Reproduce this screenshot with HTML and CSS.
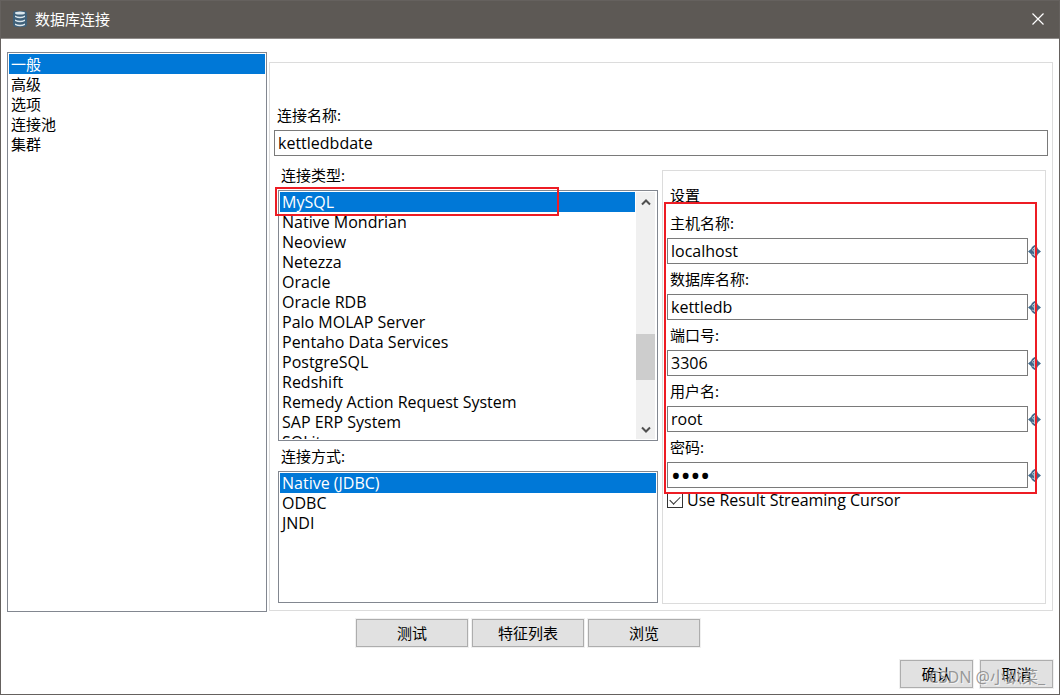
FILE: index.html
```html
<!DOCTYPE html>
<html lang="zh-CN">
<head>
<meta charset="utf-8">
<title>数据库连接</title>
<link rel="stylesheet" href="styles.css">
</head>
<body>
<svg class="defs" aria-hidden="true">
  <symbol id="variable" viewBox="0 0 13 13">
    <path d="M0 6.500 L3 4 L4 2 L6.500 0 L9 2 L10 4 L13 6.500 L10 9 L9 11 L6.500 13 L4 11 L3 9 Z" fill="#43698a"/>
    <path d="M8.700 3.800 C7.500 2.800 4.500 3 4.500 4.800 C4.500 6.800 8.500 6 8.500 8.200 C8.500 10 5.300 10 4.200 9 M6.500 2 V11" fill="none" stroke="#b9cad6" stroke-width="1"/>
  </symbol>
</svg>
<div class="window">
  <header class="titlebar">
    <svg class="app-icon" viewBox="0 0 14 18" aria-hidden="true">
      <rect x="0" y="1" width="14" height="16" rx="3" fill="#3f6079"/>
      <g fill="#dbe6ed">
        <ellipse cx="7" cy="3" rx="5" ry="1.500"/>
        <path d="M2 5.500 Q7 8 12 5.500 V7 Q7 9.500 2 7Z"/>
        <path d="M2 9.500 Q7 12 12 9.500 V11 Q7 13.500 2 11Z"/>
        <path d="M2 13.500 Q7 16 12 13.500 V15 Q7 17.500 2 15Z"/>
      </g>
    </svg>
    <h1 class="title">数据库连接</h1>
    <button class="close" type="button" aria-label="关闭">
      <svg viewBox="0 0 12 12" aria-hidden="true"><path d="M0.500 0.500 L11.500 11.500 M11.500 0.500 L0.500 11.500" stroke="#fff" stroke-width="1.200"/></svg>
    </button>
  </header>

  <main class="body">
    <ul class="listbox" role="listbox" aria-label="分类">
      <li class="option selected" role="option" aria-selected="true">一般</li>
      <li class="option" role="option">高级</li>
      <li class="option" role="option">选项</li>
      <li class="option" role="option">连接池</li>
      <li class="option" role="option">集群</li>
    </ul>

    <section class="group">
      <label class="label" for="name">连接名称:</label>
      <input class="text" id="name" type="text" value="kettledbdate">

      <div class="columns">
        <div class="choices">
          <span class="label" id="type-label">连接类型:</span>
          <div class="listbox scrolling marked">
            <ul class="options latin" role="listbox" aria-labelledby="type-label">
              <li class="option selected" role="option" aria-selected="true">MySQL</li>
              <li class="option" role="option">Native Mondrian</li>
              <li class="option" role="option">Neoview</li>
              <li class="option" role="option">Netezza</li>
              <li class="option" role="option">Oracle</li>
              <li class="option" role="option">Oracle RDB</li>
              <li class="option" role="option">Palo MOLAP Server</li>
              <li class="option" role="option">Pentaho Data Services</li>
              <li class="option" role="option">PostgreSQL</li>
              <li class="option" role="option">Redshift</li>
              <li class="option" role="option">Remedy Action Request System</li>
              <li class="option" role="option">SAP ERP System</li>
              <li class="option" role="option">SQLite</li>
            </ul>
            <div class="scrollbar">
              <button class="arrow" type="button" aria-label="向上滚动"><svg viewBox="0 0 10 7" aria-hidden="true"><path d="M1 5.500 L5 1.500 L9 5.500"/></svg></button>
              <div class="track"><div class="thumb"></div></div>
              <button class="arrow" type="button" aria-label="向下滚动"><svg viewBox="0 0 10 7" aria-hidden="true"><path d="M1 1.500 L5 5.500 L9 1.500"/></svg></button>
            </div>
          </div>
          <span class="label" id="access-label">连接方式:</span>
          <ul class="listbox access latin" role="listbox" aria-labelledby="access-label">
            <li class="option selected" role="option" aria-selected="true">Native (JDBC)</li>
            <li class="option" role="option">ODBC</li>
            <li class="option" role="option">JNDI</li>
          </ul>
        </div>

        <section class="settings">
          <h2 class="label heading">设置</h2>
          <div class="fields">
            <div class="field">
              <label class="label" for="host">主机名称:</label>
              <div class="entry"><input class="text" id="host" type="text" value="localhost"><svg class="variable" aria-hidden="true"><use href="#variable"/></svg></div>
            </div>
            <div class="field">
              <label class="label" for="database">数据库名称:</label>
              <div class="entry"><input class="text" id="database" type="text" value="kettledb"><svg class="variable" aria-hidden="true"><use href="#variable"/></svg></div>
            </div>
            <div class="field">
              <label class="label" for="port">端口号:</label>
              <div class="entry"><input class="text" id="port" type="text" value="3306"><svg class="variable" aria-hidden="true"><use href="#variable"/></svg></div>
            </div>
            <div class="field">
              <label class="label" for="user">用户名:</label>
              <div class="entry"><input class="text" id="user" type="text" value="root"><svg class="variable" aria-hidden="true"><use href="#variable"/></svg></div>
            </div>
            <div class="field">
              <label class="label" for="password">密码:</label>
              <div class="entry"><input class="text password" id="password" type="password" value="root"><svg class="variable" aria-hidden="true"><use href="#variable"/></svg></div>
            </div>
          </div>
          <label class="check latin"><input class="box" type="checkbox" checked>Use Result Streaming Cursor</label>
        </section>
      </div>
    </section>
  </main>

  <div class="actions">
    <button class="button wide" type="button">测试</button>
    <button class="button wide" type="button">特征列表</button>
    <button class="button wide" type="button">浏览</button>
  </div>
  <footer class="footer">
    <button class="button" type="button">确认</button>
    <button class="button" type="button">取消</button>
    <span class="watermark">CSDN @小趴菜_</span>
  </footer>
</div>
</body>
</html>
```
FILE: styles.css
```css
*, *::before, *::after { box-sizing: border-box; }

body {
  margin: 0;
  background: #fff;
  color: #000;
  font: 15px/20px "Noto Sans", "Noto Sans CJK SC", sans-serif;
}

input, button { font: inherit; color: inherit; }
ul { margin: 0; padding: 0; list-style: none; }
.defs { position: absolute; width: 0; height: 0; }
.latin, .text { font-family: "Open Sans", "Noto Sans CJK SC", sans-serif; font-size: 16px; }

.window {
  display: flex;
  flex-direction: column;
  min-height: 100vh;
  border: 1px solid #65615e;
}

/* Title bar */
.titlebar {
  display: flex;
  align-items: center;
  height: 38px;
  padding: 0 15px 2px 12px;
  border-bottom: 1px solid #8e8b89;
  background: #5d5955;
  color: #fff;
}
.app-icon { width: 14px; height: 18px; }
.title { flex: 1; margin: 0 0 0 8px; font-size: 15px; font-weight: 400; }
.close { display: flex; padding: 0; border: 0; background: none; }
.close svg { width: 12px; height: 12px; }

/* Main area */
.body {
  flex: 1;
  display: grid;
  grid-template-columns: 260px 1fr;
  gap: 2px;
  padding: 13px 6px 0;
}
.listbox {
  padding: 1px;
  border: 1px solid #828790;
  background: #fff;
}
.option { height: 20px; padding: 0 2px; white-space: nowrap; }
.selected { background: #0078d7; color: #fff; }

.group {
  display: flex;
  flex-direction: column;
  margin: 10px 0 1px;
  padding: 42px 4px 6px;
  border: 1px solid #dcdcdc;
}
.label { display: block; padding: 0 3px; }
.text {
  width: 100%;
  height: 26px;
  padding: 0 3px;
  border: 1px solid #7a7a7a;
  border-radius: 0;
  background: #fff;
  outline: 0;
}
.password { font-family: "Noto Sans", sans-serif; font-size: 26px; }
.group > .text { margin-top: 5px; }

.columns {
  flex: 1;
  display: grid;
  grid-template-columns: 95fr 96fr;
  gap: 4px;
  padding: 9px 2px 0 4px;
}
.choices { display: flex; flex-direction: column; gap: 5px; padding-bottom: 1px; }

.scrolling { position: relative; display: flex; height: 251px; padding-right: 2px; }
.options { flex: 1; overflow: hidden; }
.scrollbar {
  display: flex;
  flex-direction: column;
  width: 19px;
  margin-left: 1px;
  background: #f0f0f0;
}
.arrow {
  display: flex;
  align-items: center;
  justify-content: center;
  height: 20px;
  padding: 0;
  border: 0;
  background: none;
}
.arrow svg { width: 10px; height: 7px; fill: none; stroke: #505050; stroke-width: 2; }
.track { flex: 1; padding-top: 122px; }
.thumb { height: 46px; background: #cdcdcd; }
.access { flex: 1; min-height: 64px; }

/* Red frames */
.marked::after,
.fields::after {
  content: "";
  position: absolute;
  border: 2px solid #ed1c24;
  pointer-events: none;
}
.marked::after { top: -4px; left: -4px; width: 284px; height: 29px; }
.fields::after { top: -11px; right: 8px; bottom: -6px; left: -3px; }

/* Connection settings */
.settings {
  margin-top: 5px;
  padding: 14px 0 0 4px;
  border: 1px solid #dcdcdc;
}
.heading { margin: 0 0 8px; font-size: 15px; font-weight: 400; }
.fields { position: relative; display: grid; gap: 5px; }
.field { display: grid; gap: 5px; }
.entry { display: flex; align-items: center; padding-right: 4px; }
.variable { flex: none; width: 13px; height: 13px; }
.check { display: flex; align-items: center; gap: 4px; margin-top: 2px; }
.box {
  appearance: none;
  width: 16px;
  height: 16px;
  margin: 0;
  border: 1px solid #333;
  background: #fff;
}
.box:checked::before {
  content: "";
  display: block;
  width: 10px;
  height: 6px;
  margin: 3px 0 0 2px;
  border: solid #333;
  border-width: 0 0 1px 1px;
  transform: rotate(-45deg);
}

/* Buttons */
.actions { display: flex; justify-content: center; gap: 4px; padding: 7px 4px 0 0; }
.button {
  width: 73px;
  height: 28px;
  padding: 0 0 1px;
  border: 1px solid #adadad;
  background: #e1e1e1;
  outline: 1px solid #f0f0f0;
}
.wide { width: 112px; }
.footer {
  position: relative;
  display: flex;
  justify-content: flex-end;
  gap: 7px;
  padding: 13px 6px 6px;
}
.watermark {
  position: absolute;
  right: 14px;
  bottom: 7px;
  color: rgba(130, 130, 130, 0.8);
  font-size: 16px;
  text-shadow: 1px 1px 0 rgba(255, 255, 255, 0.6);
  pointer-events: none;
}
```
